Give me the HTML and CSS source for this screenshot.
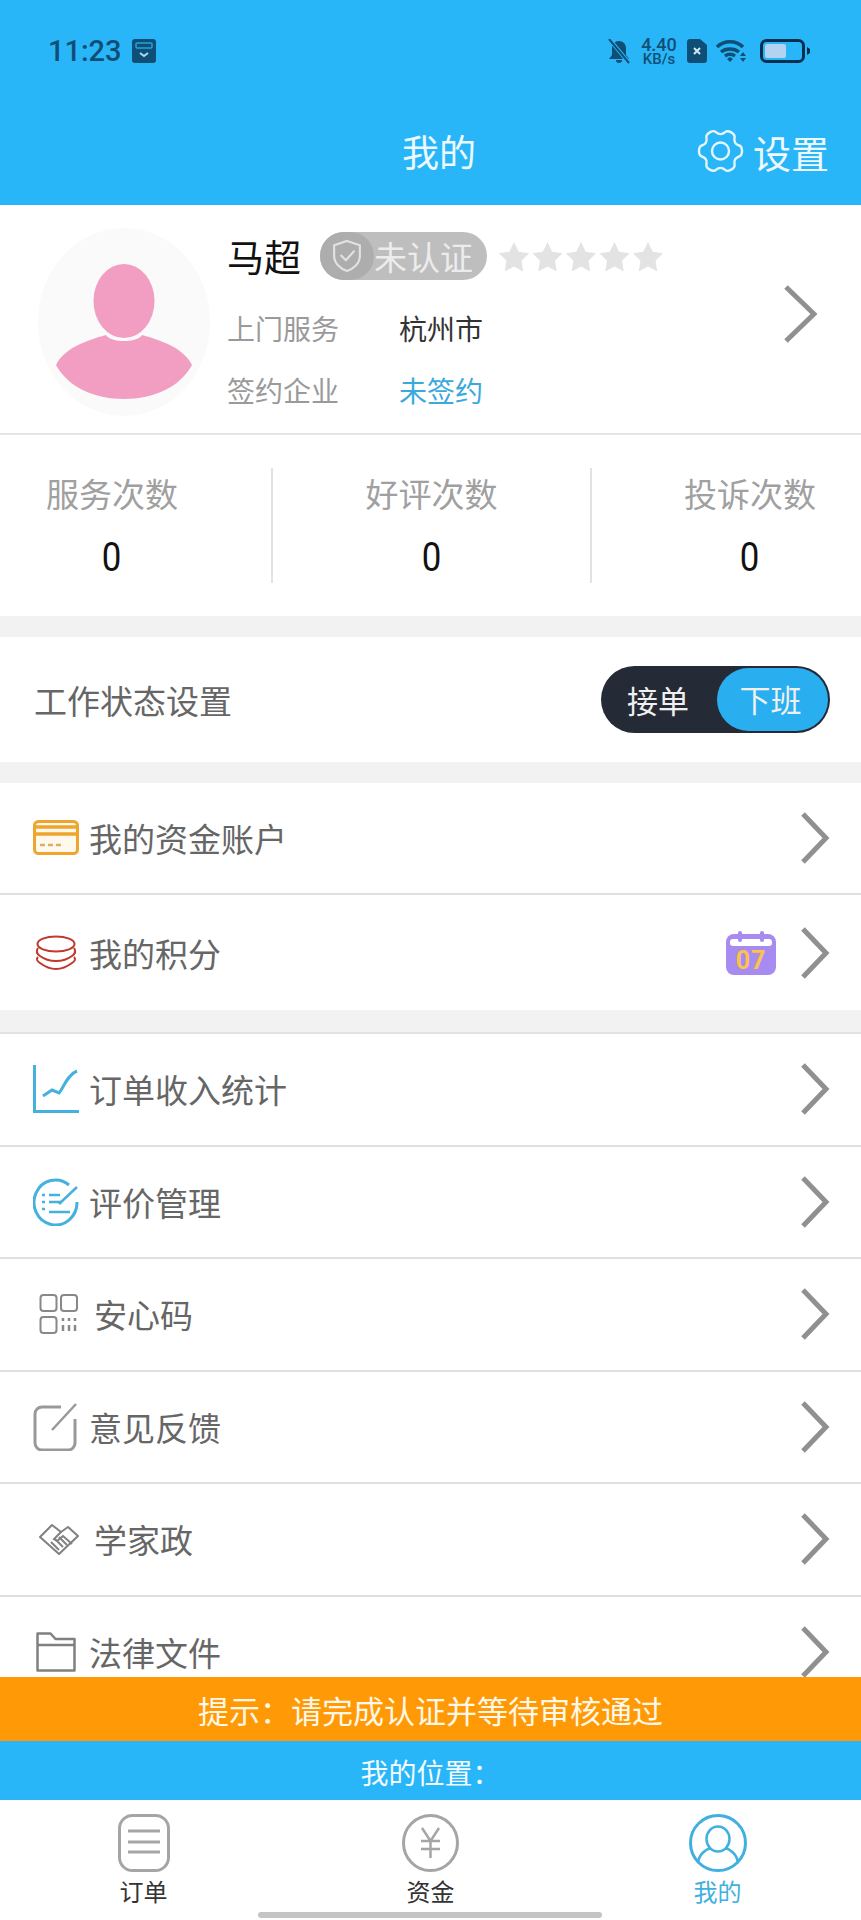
FILE: index.html
```html
<!DOCTYPE html>
<html lang="zh-CN">
<head>
    <meta charset="utf-8">
    <title>我的</title>
    <link rel="stylesheet" href="styles.css">
</head>
<body>
    <div class="header">
        <div class="status-bar">
            <span class="status-time">11:23</span>
            <svg class="status-app" width="24" height="24" viewBox="0 0 24 24">
                <rect x="0" y="0" width="24" height="24" rx="3" fill="#0f4f75"/>
                <rect x="4" y="4" width="16" height="5" rx="1" fill="none" stroke="#29b6f9" stroke-width="1.500" opacity=".8"/>
                <path d="M8 14l4 3 4-3" fill="none" stroke="#a9dcf5" stroke-width="2"/>
            </svg>
            <div class="status-right">
                <svg class="status-bell" width="22" height="25" viewBox="0 0 22 25">
                    <path d="M11 2c4 0 7 3 7 7v7l3 4H1l3-4V9c0-4 3-7 7-7z" fill="#0f4f75"/>
                    <path d="M8 21a3 3 0 0 0 6 0z" fill="#0f4f75"/>
                    <path d="M2 1l19 23" stroke="#29b6f9" stroke-width="4"/>
                    <path d="M1 0l20 24" stroke="#0f4f75" stroke-width="2"/>
                </svg>
                <div class="status-speed">
                    <span class="speed-num">4.40</span>
                    <span class="speed-unit">KB/s</span>
                </div>
                <svg class="status-sim" width="20" height="24" viewBox="0 0 20 24">
                    <path d="M3 0h10l7 6v15a3 3 0 0 1-3 3H3a3 3 0 0 1-3-3V3a3 3 0 0 1 3-3z" fill="#0f4f75"/>
                    <path d="M7 9l6 6M13 9l-6 6" stroke="#cfe9f7" stroke-width="2"/>
                </svg>
                <svg class="status-wifi" width="30" height="24" viewBox="0 0 30 24">
                    <path d="M1 8c7-7 19-7 26 0M5 13c5-4 13-4 18 0M9 17c3-2 7-2 10 0" fill="none" stroke="#0f4f75" stroke-width="3.500"/>
                    <path d="M11 20l3-2 3 2-3 3z" fill="#0f4f75"/>
                    <path d="M27 13l-3 4h6zM27 23l-3-4h6z" fill="#0f4f75"/>
                </svg>
                <svg class="status-battery" width="50" height="24" viewBox="0 0 50 24">
                    <rect x="1.500" y="1.500" width="42" height="21" rx="5" fill="none" stroke="#07304f" stroke-width="3"/>
                    <rect x="5" y="5" width="21" height="14" rx="2" fill="#b4d3f1"/>
                    <path d="M47 8l3 2v4l-3 2z" fill="#07304f"/>
                </svg>
            </div>
        </div>
        <div class="title-bar">
            <span></span>
            <div class="title">我的</div>
            <div class="settings">
                <svg width="47" height="46" viewBox="0 0 47 46">
                    <path d="M23.500 6.170Q25.870 6.170 28.090 4.130Q30.300 2.080 34.250 4.370Q38.200 6.650 37.550 9.590Q36.900 12.530 38.080 14.580Q39.260 16.630 42.130 17.520Q45 18.400 45 23Q45 27.600 42.130 28.480Q39.260 29.370 38.080 31.420Q36.900 33.470 37.550 36.410Q38.200 39.350 34.250 41.630Q30.300 43.920 28.090 41.870Q25.870 39.830 23.500 39.830Q21.130 39.830 18.910 41.870Q16.700 43.920 12.750 41.630Q8.800 39.350 9.450 36.410Q10.100 33.470 8.920 31.420Q7.740 29.370 4.870 28.480Q2 27.600 2 23Q2 18.400 4.870 17.520Q7.740 16.630 8.920 14.580Q10.100 12.530 9.450 9.590Q8.800 6.650 12.750 4.370Q16.700 2.080 18.910 4.130Q21.130 6.170 23.500 6.170z" fill="none" stroke="#e6f6ff" stroke-width="2.400"/>
                    <circle cx="23.500" cy="23" r="8.500" fill="none" stroke="#e6f6ff" stroke-width="2.400"/>
                </svg>
                <span>设置</span>
            </div>
        </div>
    </div>

    <div class="content">
        <div class="profile">
            <svg class="avatar" width="172" height="188" viewBox="0 0 172 188">
                <ellipse cx="86" cy="94" rx="86" ry="94" fill="#fafafa"/>
                <ellipse cx="86" cy="73" rx="30.500" ry="37" fill="#f19ec2"/>
                <path d="M68 107c5 8 31 8 36 0 22 6 42 14 50 30-12 22-38 34-68 34s-56-12-68-34c8-16 28-24 50-30z" fill="#f19ec2"/>
            </svg>
            <div class="info">
                <div class="name-row">
                    <span class="name">马超</span>
                    <div class="badge">
                        <span class="badge-icon">
                            <svg width="30" height="36" viewBox="0 0 28 32">
                                <path d="M14 2l12 4v10c0 7-6 12-12 14C8 28 2 23 2 16V6z" fill="none" stroke="#e2e2e2" stroke-width="2"/>
                                <path d="M8 15l5 5 8-9" fill="none" stroke="#e2e2e2" stroke-width="2"/>
                            </svg>
                        </span>
                        <span>未认证</span>
                    </div>
                    <svg class="stars" width="166" height="30" viewBox="0 0 166 30">
                        <defs>
                            <path id="star" d="M16 1l4.700 9.800 10.300 1.500-7.500 7.500 1.800 10.700-9.300-5.100-9.300 5.100 1.800-10.700L1 12.300l10.300-1.500z"/>
                        </defs>
                        <use href="#star" fill="#e3e3e3"/>
                        <use href="#star" x="33.500" fill="#e3e3e3"/>
                        <use href="#star" x="67" fill="#e3e3e3"/>
                        <use href="#star" x="100.500" fill="#e3e3e3"/>
                        <use href="#star" x="134" fill="#e3e3e3"/>
                    </svg>
                </div>
                <div class="info-row first">
                    <span class="info-label">上门服务</span>
                    <span class="info-value">杭州市</span>
                </div>
                <div class="info-row">
                    <span class="info-label">签约企业</span>
                    <span class="info-value blue">未签约</span>
                </div>
            </div>
            <svg class="chevron chevron-big" width="34" height="58" viewBox="0 0 34 58">
                <path d="M3 2l28 27L3 56"/>
            </svg>
        </div>

        <div class="stats">
            <div class="stat stat-first">
                <div class="stat-label">服务次数</div>
                <div class="stat-num"><span>0</span></div>
            </div>
            <div class="stat">
                <div class="stat-label">好评次数</div>
                <div class="stat-num"><span>0</span></div>
            </div>
            <div class="stat stat-last">
                <div class="stat-label">投诉次数</div>
                <div class="stat-num"><span>0</span></div>
            </div>
        </div>

        <div class="work-row">
            <span class="work-label">工作状态设置</span>
            <div class="toggle">
                <span class="toggle-off">接单</span>
                <span class="toggle-on">下班</span>
            </div>
        </div>

        <div class="section">
            <div class="list-row">
                <svg class="row-icon" width="46" height="36" viewBox="0 0 46 36">
                    <rect x="1.500" y="1.500" width="43" height="32" rx="4" fill="#fff8ec" stroke="#eea52e" stroke-width="3"/>
                    <path d="M2 7h42M2 14h42" stroke="#eea52e" stroke-width="3.500"/>
                    <path d="M7 25h5M15 25h5M23 25h5" stroke="#d9b06a" stroke-width="2.500"/>
                </svg>
                <span class="row-text">我的资金账户</span>
                <svg class="chevron" width="30" height="54" viewBox="0 0 30 54"><path d="M3 3l23 24L3 51"/></svg>
            </div>
            <div class="list-row list-row-last">
                <svg class="row-icon" width="46" height="36" viewBox="0 0 46 36">
                    <ellipse cx="23" cy="9" rx="18.500" ry="7.500" fill="none" stroke="#c0392f" stroke-width="2"/>
                    <path d="M5 13c-2 3-1 6 2 8 4 3 10 5 16 5s12-2 16-5c3-2 4-5 2-8M5 22c-2 2-1 4 2 6 4 3 10 6 16 6s12-3 16-6c3-2 4-4 2-6" fill="none" stroke="#c0392f" stroke-width="2"/>
                </svg>
                <span class="row-text">我的积分</span>
                <svg class="calendar" width="50" height="44" viewBox="0 0 50 44">
                    <rect x="0" y="3" width="50" height="41" rx="8" fill="#a78bf0"/>
                    <rect x="4" y="8" width="42" height="7" rx="3" fill="#fff"/>
                    <rect x="12" y="0" width="4" height="11" rx="2" fill="#a78bf0"/>
                    <rect x="34" y="0" width="4" height="11" rx="2" fill="#a78bf0"/>
                    <text x="25" y="38" text-anchor="middle" class="calendar-num">07</text>
                </svg>
                <svg class="chevron" width="30" height="54" viewBox="0 0 30 54"><path d="M3 3l23 24L3 51"/></svg>
            </div>
        </div>

        <div class="section section-lined">
            <div class="list-row">
                <svg class="row-icon" width="46" height="48" viewBox="0 0 46 48">
                    <path d="M1.500 0v46.500H46" fill="none" stroke="#45b1dd" stroke-width="3"/>
                    <path d="M10 31l9-6 7 3c5-6 8-18 18-22" fill="none" stroke="#45b1dd" stroke-width="3"/>
                </svg>
                <span class="row-text">订单收入统计</span>
                <svg class="chevron" width="30" height="54" viewBox="0 0 30 54"><path d="M3 3l23 24L3 51"/></svg>
            </div>
            <div class="list-row">
                <svg class="row-icon" width="46" height="48" viewBox="0 0 46 48">
                    <path d="M36 7a21.500 22.500 0 1 0 8 17" fill="none" stroke="#45b1dd" stroke-width="3"/>
                    <path d="M9 17h3M9 24h3M9 31h3M16 17h11M16 24h13M16 34h21" stroke="#45b1dd" stroke-width="2.500"/>
                    <path d="M26 26l18-17" stroke="#45b1dd" stroke-width="2.500"/>
                </svg>
                <span class="row-text">评价管理</span>
                <svg class="chevron" width="30" height="54" viewBox="0 0 30 54"><path d="M3 3l23 24L3 51"/></svg>
            </div>
            <div class="list-row">
                <svg class="row-icon row-icon-narrow" width="40" height="42" viewBox="0 0 40 42">
                    <rect x="1.500" y="2" width="16" height="16" rx="3" fill="none" stroke="#888" stroke-width="2"/>
                    <rect x="22" y="2" width="16" height="16" rx="3" fill="none" stroke="#888" stroke-width="2"/>
                    <rect x="1.500" y="24" width="16" height="16" rx="3" fill="none" stroke="#888" stroke-width="2"/>
                    <path d="M24 25v3M24 32v6M30 25v3M30 32v6M36 25v3M36 32v6" stroke="#888" stroke-width="2.500"/>
                </svg>
                <span class="row-text">安心码</span>
                <svg class="chevron" width="30" height="54" viewBox="0 0 30 54"><path d="M3 3l23 24L3 51"/></svg>
            </div>
            <div class="list-row">
                <svg class="row-icon" width="46" height="48" viewBox="0 0 46 48">
                    <path d="M28 4H9a7 7 0 0 0-7 7v29a7 7 0 0 0 7 7h26a7 7 0 0 0 7-7V16" fill="none" stroke="#999" stroke-width="3"/>
                    <path d="M19 27L43 1" stroke="#999" stroke-width="2.500"/>
                </svg>
                <span class="row-text">意见反馈</span>
                <svg class="chevron" width="30" height="54" viewBox="0 0 30 54"><path d="M3 3l23 24L3 51"/></svg>
            </div>
            <div class="list-row">
                <svg class="row-icon row-icon-narrow" width="40" height="32" viewBox="0 0 40 32">
                    <path d="M1 14L13 2l9 7 7-5 10 9-19 18z" fill="none" stroke="#808080" stroke-width="2" stroke-linejoin="round"/>
                    <path d="M22 9l-7 7 3 2 6-5 9 8M12 19l8 8M16 16l8 8M20 14l8 8" fill="none" stroke="#808080" stroke-width="2"/>
                </svg>
                <span class="row-text">学家政</span>
                <svg class="chevron" width="30" height="54" viewBox="0 0 30 54"><path d="M3 3l23 24L3 51"/></svg>
            </div>
            <div class="list-row">
                <svg class="row-icon row-icon-folder" width="40" height="40" viewBox="0 0 40 40">
                    <path d="M1.500 38.500V1.500h13l5 5.500h19v31.500z M1.500 13h37" fill="none" stroke="#808080" stroke-width="2.500" stroke-linejoin="round"/>
                </svg>
                <span class="row-text">法律文件</span>
                <svg class="chevron" width="30" height="54" viewBox="0 0 30 54"><path d="M3 3l23 24L3 51"/></svg>
            </div>
        </div>
    </div>

    <div class="notice">提示<span class="colon">：</span>请完成认证并等待审核通过</div>
    <div class="location">我的位置<span class="colon">：</span></div>

    <div class="tabs">
        <div class="tab">
            <svg width="52" height="58" viewBox="0 0 52 58">
                <rect x="1.500" y="1.500" width="49" height="55" rx="13" fill="none" stroke="#a5a5a5" stroke-width="3"/>
                <path d="M10 17h32M10 28h32M10 38h32" stroke="#a5a5a5" stroke-width="3"/>
            </svg>
            <span>订单</span>
        </div>
        <div class="tab">
            <svg width="57" height="58" viewBox="0 0 57 58">
                <ellipse cx="28.500" cy="29" rx="27" ry="27.500" fill="none" stroke="#a5a5a5" stroke-width="3"/>
                <path d="M20 14l8.500 13L37 14M19 27h19M19 35h19M28.500 27v17" fill="none" stroke="#a5a5a5" stroke-width="2.500"/>
            </svg>
            <span>资金</span>
        </div>
        <div class="tab tab-active">
            <svg width="58" height="58" viewBox="0 0 58 58">
                <ellipse cx="29" cy="29" rx="27.500" ry="27.500" fill="none" stroke="#3fb0e0" stroke-width="3"/>
                <ellipse cx="29" cy="25" rx="11.500" ry="12.500" fill="none" stroke="#3fb0e0" stroke-width="2.500"/>
                <path d="M9 49c1-9 8-14 13-15M49 49c-1-9-8-14-13-15" fill="none" stroke="#3fb0e0" stroke-width="2.500"/>
            </svg>
            <span>我的</span>
        </div>
    </div>
    <div class="home-bar"></div>
</body>
</html>
```

FILE: styles.css
```css
* {
    box-sizing: border-box;
}

body {
    margin: 0;
    height: 1920px;
    display: flex;
    flex-direction: column;
    overflow: hidden;
    position: relative;
    background-color: #f2f2f2;
    font-family: "Noto Sans CJK SC", "Noto Sans", sans-serif;
    color: #666;
}

.header {
    height: 205px;
    flex-shrink: 0;
    background-color: #29b6f9;
}

.status-bar {
    display: flex;
    align-items: center;
    height: 26px;
    padding: 38px 51px 0 48px;
    box-sizing: content-box;
    color: #0f4f75;
}

.status-time {
    font-family: Roboto, sans-serif;
    font-size: 29px;
    font-weight: 500;
    line-height: 26px;
    width: 84px;
}

.status-right {
    display: flex;
    align-items: center;
    margin-left: auto;
}

.status-speed {
    display: flex;
    flex-direction: column;
    align-items: center;
    width: 40px;
    margin: 0 8px 0 9px;
    font-family: Roboto, sans-serif;
    font-weight: 500;
}

.speed-num {
    font-size: 18px;
    line-height: 16px;
}

.speed-unit {
    font-size: 15px;
    line-height: 13px;
}

.status-wifi {
    margin: 0 14px 0 9px;
}

.title-bar {
    display: grid;
    grid-template-columns: 1fr auto 1fr;
    align-items: center;
    height: 60px;
    margin-top: 57px;
    padding: 0 32px 0 49px;
    color: #eef9ff;
}

.title {
    font-size: 37px;
}

.settings {
    display: flex;
    align-items: center;
    justify-content: flex-end;
    font-size: 38px;
}

.settings svg {
    margin-right: 9px;
}

.content {
    flex: 1;
    overflow: hidden;
}

.profile {
    display: flex;
    align-items: center;
    height: 230px;
    padding: 0 44px 2px 38px;
    background-color: #fff;
    border-bottom: 2px solid #e5e5e5;
}

.avatar {
    margin-top: 8px;
    flex-shrink: 0;
}

.info {
    align-self: flex-start;
    padding: 27px 0 0 17px;
}

.name-row {
    display: flex;
    align-items: center;
    height: 48px;
}

.name {
    font-size: 37px;
    color: #111;
    width: 93px;
}

.badge {
    display: flex;
    align-items: center;
    width: 167px;
    height: 48px;
    border-radius: 24px;
    background-color: #bebebe;
    color: #ececec;
    font-size: 33px;
}

.badge-icon {
    display: flex;
    align-items: center;
    justify-content: center;
    width: 54px;
    height: 48px;
    border-radius: 24px;
    background-color: #adadad;
}

.stars {
    margin-left: 11px;
}

.info-row {
    display: flex;
    height: 40px;
    margin-top: 22px;
    font-size: 28px;
    line-height: 40px;
}

.info-row.first {
    margin-top: 28px;
}

.info-label {
    width: 172px;
    color: #9a9a9a;
}

.info-value {
    color: #333;
}

.info-value.blue {
    color: #3aa9dc;
}

.chevron {
    flex-shrink: 0;
    fill: none;
    stroke: #909090;
    stroke-width: 5;
}

.chevron-big {
    margin-left: auto;
    margin-top: -8px;
}

.stats {
    display: grid;
    grid-template-columns: 271px 319px 271px;
    height: 181px;
    padding-top: 33px;
    background-color: #fff;
}

.stat {
    height: 115px;
    text-align: center;
    border-left: 2px solid #e2e2e2;
}

.stat-first {
    padding-right: 47px;
    border-left: none;
}

.stat-last {
    padding-left: 47px;
}

.stat-label {
    font-size: 33px;
    line-height: 50px;
    color: #a0a0a0;
}

.stat-num {
    margin-top: 14px;
    font-family: Roboto, sans-serif;
    font-size: 41px;
    line-height: 50px;
    color: #111;
}

.stat-num span {
    display: inline-block;
    transform: scaleX(.85);
}

.work-row {
    display: flex;
    align-items: center;
    justify-content: space-between;
    height: 125px;
    margin-top: 21px;
    padding: 0 31px 0 34px;
    background-color: #fff;
}

.work-label {
    font-size: 33px;
}

.toggle {
    display: flex;
    align-items: center;
    justify-content: space-between;
    width: 229px;
    height: 67px;
    padding: 2px;
    border-radius: 34px;
    background-color: #252a37;
    color: #f0f0f0;
    font-size: 31px;
}

.toggle-off {
    margin-left: 24px;
}

.toggle-on {
    width: 111px;
    height: 63px;
    padding-right: 4px;
    border-radius: 32px;
    background-color: #29aef0;
    text-align: center;
    line-height: 62px;
}

.section {
    margin-top: 21px;
    background-color: #fff;
}

.section-lined {
    margin-top: 22px;
    border-top: 2px solid #e2e2e2;
}

.list-row {
    display: flex;
    align-items: center;
    height: 112px;
    padding: 0 31px 0 33px;
    border-bottom: 2px solid #e0e0e0;
}

.section-lined .list-row {
    height: 112.5px;
}

.list-row-last {
    height: 115px;
    border-bottom: none;
}

.row-icon {
    flex-shrink: 0;
    margin-right: 10px;
}

.row-icon-narrow {
    margin-left: 6px;
    margin-right: 15px;
}

.row-icon-folder {
    margin-left: 3px;
    margin-right: 13px;
}

.row-text {
    font-size: 33px;
    color: #666;
}

.list-row .chevron {
    margin-left: auto;
}

.list-row .calendar {
    margin-left: auto;
    margin-right: 24px;
}

.list-row .calendar + .chevron {
    margin-left: 0;
}

.calendar-num {
    font-family: Roboto, sans-serif;
    font-size: 25px;
    font-weight: 700;
    letter-spacing: 1px;
    fill: #fcc24d;
}

.notice {
    flex-shrink: 0;
    height: 64px;
    background-color: #ff9a06;
    color: #fff8e8;
    font-size: 31px;
    line-height: 66px;
    text-align: center;
}

.location {
    flex-shrink: 0;
    height: 59px;
    background-color: #29b6f9;
    color: #f2fbff;
    font-size: 28px;
    line-height: 62px;
    text-align: center;
}

.colon {
    font-family: "Noto Sans CJK TC", sans-serif;
}

.tabs {
    flex-shrink: 0;
    display: grid;
    grid-template-columns: repeat(3, 1fr);
    height: 120px;
    padding-top: 14px;
    background-color: #fff;
}

.tab {
    display: flex;
    flex-direction: column;
    align-items: center;
    color: #333;
    font-size: 24px;
    line-height: 34px;
}

.tab span {
    margin-top: 2px;
}

.tab-active {
    color: #3fb0e0;
}

.home-bar {
    position: absolute;
    left: 258px;
    bottom: 2px;
    width: 344px;
    height: 6px;
    border-radius: 3px;
    background-color: #c4c4c4;
}
```
